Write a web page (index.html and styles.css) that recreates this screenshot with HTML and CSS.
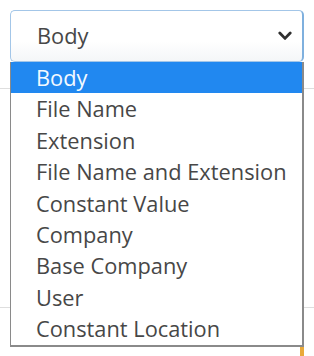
FILE: index.html
```html
<!DOCTYPE html>
<html lang="en">

<head>
    <meta charset="UTF-8">
    <meta name="viewport" content="width=device-width, initial-scale=1.0">
    <title>Source</title>
    <link rel="stylesheet" href="styles.css">
</head>

<body>
    <div class="field">
        <div class="select">
            <span>Body</span>
            <svg class="chevron" width="14" height="10" viewBox="0 0 14 10">
                <path d="M1.8 2 L7 7.4 L12.2 2" fill="none" stroke="#2f2f2f" stroke-width="2.8" stroke-linecap="round" stroke-linejoin="round"/>
            </svg>
        </div>

        <ul class="options">
            <li class="selected">Body</li>
            <li>File Name</li>
            <li>Extension</li>
            <li>File Name and Extension</li>
            <li>Constant Value</li>
            <li>Company</li>
            <li>Base Company</li>
            <li>User</li>
            <li>Constant Location</li>
        </ul>
    </div>

    <!-- form rows behind the open list -->
    <div class="backdrop">
        <div class="row row-top"></div>
        <div class="row row-mid"></div>
        <div class="row row-end"><span class="mark"></span></div>
    </div>
</body>

</html>
```

FILE: styles.css
```css
body {
    font-family: "Open Sans", "Liberation Sans", sans-serif;
    margin: 0;
    padding: 10px 10px 0;
    background-color: #fff;
    color: #474747;
    overflow: hidden;
}

.field {
    position: relative;
    width: 294px;
}

.select {
    display: flex;
    justify-content: space-between;
    align-items: center;
    box-sizing: border-box;
    height: 52px;
    padding: 0 10px 1px 26px;
    border: 1px solid #a3c6e8;
    border-right: 2px solid #7fb0de;
    border-radius: 5px;
    background: linear-gradient(#fff 60%, #f4f6f8);
    font-size: 21.8px;
}

.chevron {
    display: block;
}

.options {
    position: absolute;
    top: 52px;
    left: 0;
    width: 294px;
    box-sizing: border-box;
    margin: 0;
    padding: 0;
    list-style: none;
    background-color: #fff;
    border: 1px solid #8a8a8a;
    border-top: none;
    border-right: 2px solid #8a8a8a;
    border-bottom: 2px solid #8a8a8a;
    z-index: 2;
}

.options li {
    height: 31.4px;
    line-height: 32px;
    padding-left: 25px;
    font-size: 21.8px;
    white-space: nowrap;
}

.options .selected {
    background-color: #2188f0;
    color: #f4f9ff;
}

.backdrop {
    margin: 0 -10px;
}

.row {
    border-bottom: 1px solid #dedede;
}

.row-top {
    height: 26px;
}

.row-mid {
    height: 218px;
}

.row-end {
    position: relative;
    height: 60px;
    border-bottom: none;
}

.mark {
    position: absolute;
    top: 38px;
    right: 10px;
    width: 4px;
    height: 20px;
    background-color: #e9a93a;
}
```
